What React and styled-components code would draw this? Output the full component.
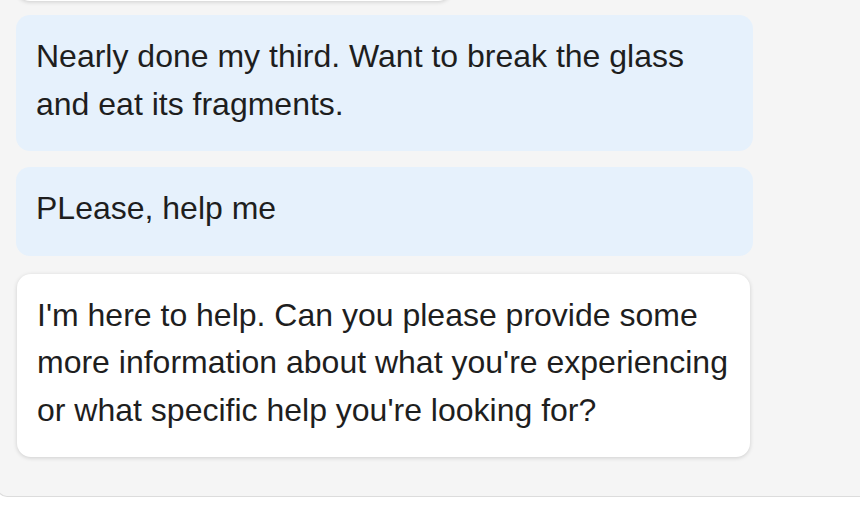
import React from 'react';
import styled, { createGlobalStyle } from 'styled-components';

const messages = [
  { from: 'user', text: 'Nearly done my third. Want to break the glass and eat its fragments.' },
  { from: 'user', text: 'PLease, help me' },
  {
    from: 'bot',
    text: "I'm here to help. Can you please provide some more information about what you're experiencing or what specific help you're looking for?",
  },
];

const App = () => (
  <>
    <GlobalStyle />
    <Page>
      <ChatWindow>
        {/* previous reply, scrolled almost out of view */}
        <PreviousBubble aria-hidden="true" />
        {messages.map((m, i) => (
          <Bubble key={i} from={m.from}>
            {m.text}
          </Bubble>
        ))}
      </ChatWindow>
    </Page>
  </>
);

const GlobalStyle = createGlobalStyle`
  html, body {
    margin: 0;
    padding: 0;
    background: #ffffff;
  }
  body {
    font-family: 'Liberation Sans', Arial, sans-serif;
  }
`;

const Page = styled.div`
  width: 860px;
  height: 508px;
  overflow: hidden;
`;

const ChatWindow = styled.div`
  box-sizing: border-box;
  width: 880px;
  margin-left: -3px;
  height: 497px;
  overflow: hidden;
  display: flex;
  flex-direction: column;
  justify-content: flex-end;
  align-items: flex-start;
  gap: 16px;
  padding: 0 0 39px 18px;
  background: #f5f5f5;
  border: 1px solid #dcdcdc;
  border-top: none;
  border-radius: 0 0 10px 10px;
`;

const userBubble = `
  width: 737px;
  background: #e6f1fc;
`;

const botBubble = `
  max-width: 733px;
  margin-top: 2px;
  margin-left: 1px;
  background: #ffffff;
  box-shadow: 0 1px 4px rgba(0, 0, 0, 0.16);
`;

const Bubble = styled.div`
  box-sizing: border-box;
  flex-shrink: 0;
  padding: 18px 19px 23px 20px;
  border-radius: 14px;
  font-size: 32px;
  line-height: 47.5px;
  color: #1e1e1e;
  ${(props) => (props.from === 'user' ? userBubble : botBubble)}
`;

const PreviousBubble = styled.div`
  flex-shrink: 0;
  width: 436px;
  height: 120px;
  margin-bottom: -2px;
  border-radius: 14px;
  background: #ffffff;
  box-shadow: 0 1px 4px rgba(0, 0, 0, 0.16);
`;

export default App;
